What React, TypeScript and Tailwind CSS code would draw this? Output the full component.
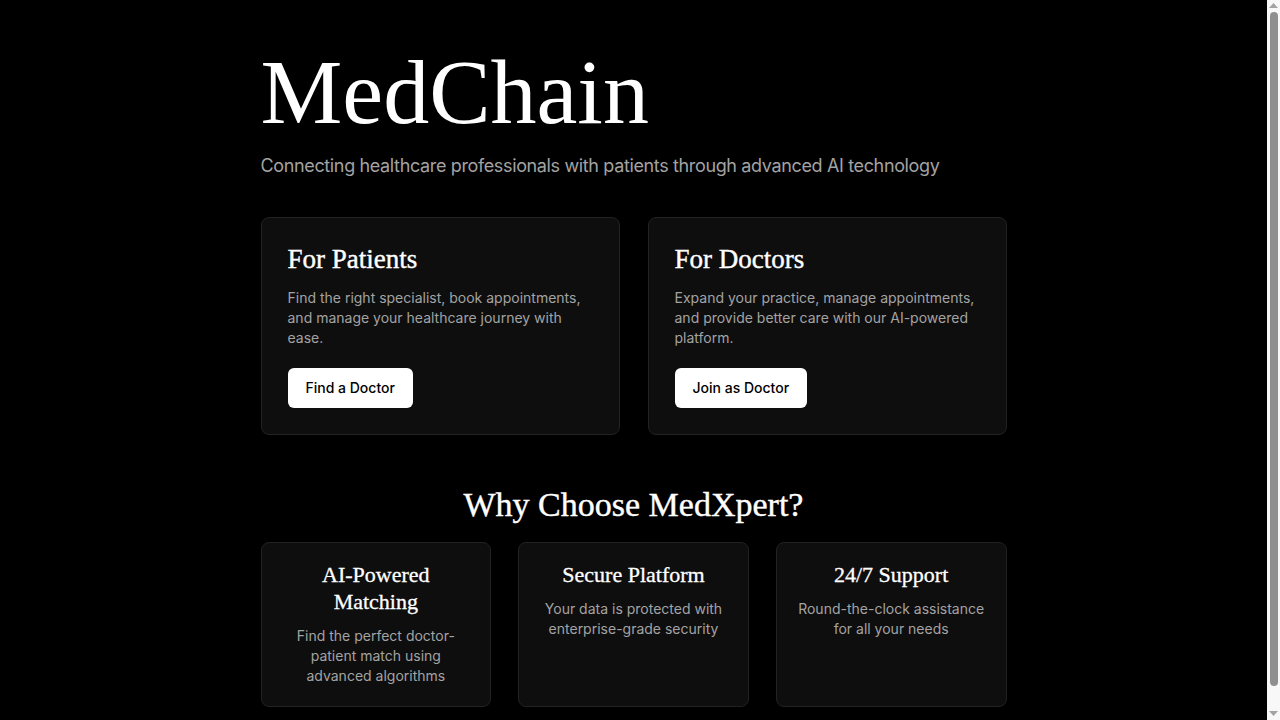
export default function App() {
  const serif = "font-['Liberation_Serif','DejaVu_Serif',serif]";
  const sans = "font-['Inter','Liberation_Sans',sans-serif]";
  return (
    <div className="flex h-screen bg-black text-white">
      <main className="flex-1 overflow-y-auto [scrollbar-width:none]">
        <div className="mx-auto w-[746px] pt-[46px] pb-[36px]">
          <h1 className={`${serif} text-[92px] leading-none font-normal text-white`}>MedChain</h1>
          <p className={`${sans} mt-[14px] text-lg leading-7 tracking-[-0.02em] text-[#a3a3a3]`}>
            Connecting healthcare professionals with patients through advanced AI technology
          </p>

          <div className="mt-[37px] grid grid-cols-2 gap-[28px]">
            {[
              {
                t: "For Patients",
                d: "Find the right specialist, book appointments, and manage your healthcare journey with ease.",
                b: "Find a Doctor",
              },
              {
                t: "For Doctors",
                d: "Expand your practice, manage appointments, and provide better care with our AI-powered platform.",
                b: "Join as Doctor",
              },
            ].map((c) => (
              <div key={c.t} className="rounded-lg border border-[#222222] bg-[#0e0e0e] p-[26px]">
                <h3
                  className={`${serif} pt-[2px] text-[27px] leading-none text-white [-webkit-text-stroke:0.4px_white]`}
                >
                  {c.t}
                </h3>
                <p className={`${sans} mt-[15px] text-sm leading-5 text-[#a3a3a3]`}>{c.d}</p>
                <button
                  className={`${sans} mt-[20px] h-10 rounded-md bg-white px-[18px] text-sm font-medium text-black`}
                >
                  {c.b}
                </button>
              </div>
            ))}
          </div>

          <h2
            className={`${serif} mt-[53px] text-center text-[34px] leading-none text-white [-webkit-text-stroke:0.4px_white]`}
          >
            Why Choose MedXpert?
          </h2>

          <div className="mt-[20px] grid grid-cols-3 gap-[27px]">
            {[
              {
                t: "AI-Powered Matching",
                d: "Find the perfect doctor-patient match using advanced algorithms",
              },
              {
                t: "Secure Platform",
                d: "Your data is protected with enterprise-grade security",
              },
              {
                t: "24/7 Support",
                d: "Round-the-clock assistance for all your needs",
              },
            ].map((c) => (
              <div
                key={c.t}
                className="rounded-lg border border-[#222222] bg-[#0e0e0e] px-5 pt-[18px] pb-[20px] text-center"
              >
                <h4
                  className={`${serif} mx-auto max-w-[150px] text-[22px] leading-[27px] text-white [-webkit-text-stroke:0.3px_white]`}
                >
                  {c.t}
                </h4>
                <p className={`${sans} mt-[11px] text-sm leading-5 text-[#a3a3a3]`}>{c.d}</p>
              </div>
            ))}
          </div>
        </div>
      </main>

      <aside className="flex w-[13px] shrink-0 flex-col items-center bg-[#f8f8f8] pt-[3px] pb-[4px]">
        <svg width="9" height="5" viewBox="0 0 9 5" className="shrink-0">
          <polygon points="0,5 4.5,0 9,5" fill="#a3a3a3" />
        </svg>
        <div className="mt-[4px] h-[674px] w-2 shrink-0 rounded-full bg-[#8f8f8f]" />
        <div className="flex-1" />
        <svg width="9" height="5" viewBox="0 0 9 5" className="shrink-0">
          <polygon points="0,0 9,0 4.5,5" fill="#a3a3a3" />
        </svg>
      </aside>
    </div>
  );
}
